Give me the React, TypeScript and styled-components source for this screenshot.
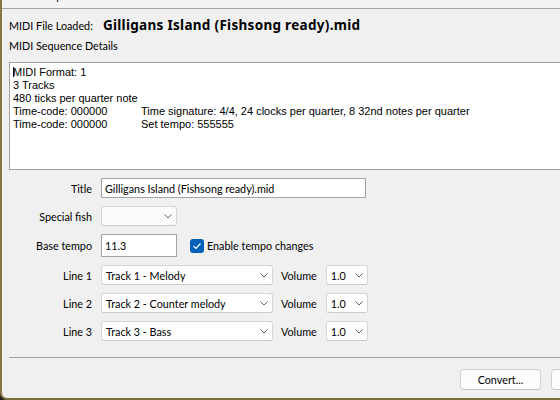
import React from "react";
import styled, { createGlobalStyle } from "styled-components";

const GlobalStyle = createGlobalStyle`
  html, body { margin: 0; padding: 0; background: #1f1f1f; }
  #root { width: 560px; height: 400px; overflow: hidden; }
  * { box-sizing: border-box; }
`;

const UI_FONT = `Lato, "Noto Sans", sans-serif`;

const Window = styled.div`
  width: 641px;
  height: 400px;
  background: #f0f0f0;
  border-left: 2px solid #857543;
  border-bottom: 2px solid #7d6e3e;
  border-bottom-left-radius: 7px;
  display: flex;
  flex-direction: column;
  font-family: ${UI_FONT};
  font-size: 10.8px;
  color: #000;
  overflow: hidden;
`;

const MenuBar = styled.div`
  height: 9px;
  flex: none;
  display: flex;
  align-items: flex-end;
  gap: 14px;
  padding-left: 7px;
  background: #f3f3f3;
  border-bottom: 1px solid #a6a6a6;
  overflow: hidden;
`;

const MenuItem = styled.span`
  line-height: 16px;
  margin-bottom: 4px;
`;

const Content = styled.div`
  flex: 1;
  display: flex;
  flex-direction: column;
  padding: 0 9px 0 7px;
`;

const LoadedRow = styled.div`
  display: flex;
  align-items: baseline;
  gap: 10px;
  height: 16px;
  line-height: 16px;
  margin-top: 8px;
`;

const FileName = styled.span`
  font-family: "Noto Sans", sans-serif;
  font-weight: 700;
  font-size: 13.5px;
  letter-spacing: 0.3px;
  line-height: 16px;
`;

const SectionLabel = styled.div`
  line-height: 16px;
  margin-top: 5px;
`;

const Details = styled.div`
  margin-top: 8px;
  height: 108px;
  background: #fff;
  border: 1px solid #a0a0a0;
  padding: 3px 3px 0 3px;
  font-family: "Liberation Sans", Arial, sans-serif;
  font-size: 11px;
  line-height: 13px;
  color: #000;
`;

const DetailLine = styled.div`
  white-space: pre;
  display: flex;
`;

const Col = styled.span`
  display: inline-block;
  width: 128px;
`;

const Caret = styled.span`
  display: inline-block;
  width: 1px;
  height: 10px;
  margin-top: 1px;
  margin-right: -1px;
  background: #000;
`;

const Form = styled.div`
  margin-top: 8px;
  display: grid;
  grid-template-columns: 83px 1fr;
  column-gap: 9px;
  row-gap: 8px;
  align-items: center;
`;

const Label = styled.label`
  text-align: right;
  white-space: nowrap;
`;

const Field = styled.div`
  display: flex;
  align-items: center;
`;

const TextInput = styled.div<{ $w: number; $h: number }>`
  width: ${(p) => p.$w}px;
  height: ${(p) => p.$h}px;
  background: #fff;
  border: 1px solid #a3a3a3;
  padding-left: 3px;
  display: flex;
  align-items: center;
  white-space: nowrap;
`;

const Combo = styled.div<{ $w: number; $empty?: boolean }>`
  width: ${(p) => p.$w}px;
  height: 20px;
  background: ${(p) => (p.$empty ? "#fbfbfb" : "#fff")};
  border: 1px solid #d6d6d6;
  border-bottom-color: #cacaca;
  border-radius: 3px;
  padding: 0 4px 0 4px;
  display: flex;
  align-items: center;
  justify-content: space-between;
  white-space: nowrap;
`;

const Chevron = () => (
  <svg width="8" height="5" viewBox="0 0 8 5" style={{ flex: "none" }}>
    <path d="M0.5 0.5 L4 4 L7.5 0.5" fill="none" stroke="#606060" strokeWidth="1" />
  </svg>
);

const CheckWrap = styled.div`
  display: flex;
  align-items: center;
  gap: 3px;
  margin-left: 13px;
`;

const CheckBox = styled.div`
  width: 14px;
  height: 14px;
  border-radius: 3px;
  background: #005fb8;
  display: flex;
  align-items: center;
  justify-content: center;
`;

const VolumeLabel = styled.span`
  margin: 0 9px 0 8px;
`;

const Separator = styled.div`
  margin-top: 16px;
  height: 1px;
  background: #a0a0a0;
  margin-right: -9px;
`;

const ButtonRow = styled.div`
  margin-top: 11px;
  display: flex;
  justify-content: flex-end;
  gap: 10px;
`;

const Button = styled.div`
  width: 81px;
  height: 21px;
  background: #fdfdfd;
  border: 1px solid #d0d0d0;
  border-bottom-color: #c2c2c2;
  border-radius: 4px;
  display: flex;
  align-items: center;
  justify-content: center;
`;

const tracks = [
  { line: "Line 1", track: "Track 1 - Melody" },
  { line: "Line 2", track: "Track 2 - Counter melody" },
  { line: "Line 3", track: "Track 3 - Bass" },
];

export default function App() {
  return (
    <>
      <GlobalStyle />
      <Window>
        <MenuBar>
          <MenuItem>File</MenuItem>
          <MenuItem>Help</MenuItem>
        </MenuBar>
        <Content>
          <LoadedRow>
            <span>MIDI File Loaded:</span>
            <FileName>Gilligans Island (Fishsong ready).mid</FileName>
          </LoadedRow>
          <SectionLabel>MIDI Sequence Details</SectionLabel>
          <Details>
            <DetailLine>
              <Caret />
              MIDI Format: 1
            </DetailLine>
            <DetailLine>3 Tracks</DetailLine>
            <DetailLine>480 ticks per quarter note</DetailLine>
            <DetailLine>
              <Col>Time-code: 000000</Col>
              <span>Time signature: 4/4, 24 clocks per quarter, 8 32nd notes per quarter</span>
            </DetailLine>
            <DetailLine>
              <Col>Time-code: 000000</Col>
              <span>Set tempo: 555555</span>
            </DetailLine>
          </Details>
          <Form>
            <Label>Title</Label>
            <Field>
              <TextInput $w={265} $h={20}>
                Gilligans Island (Fishsong ready).mid
              </TextInput>
            </Field>
            <Label>Special fish</Label>
            <Field>
              <Combo $w={76} $empty>
                <span />
                <Chevron />
              </Combo>
            </Field>
            <Label>Base tempo</Label>
            <Field>
              <TextInput $w={76} $h={23}>
                11.3
              </TextInput>
              <CheckWrap>
                <CheckBox>
                  <svg width="10" height="8" viewBox="0 0 10 8">
                    <path d="M1.5 4 L4 6.5 L8.5 1.5" fill="none" stroke="#fff" strokeWidth="1.2" />
                  </svg>
                </CheckBox>
                <span>Enable tempo changes</span>
              </CheckWrap>
            </Field>
            {tracks.map((t) => (
              <React.Fragment key={t.line}>
                <Label>{t.line}</Label>
                <Field>
                  <Combo $w={172}>
                    <span>{t.track}</span>
                    <Chevron />
                  </Combo>
                  <VolumeLabel>Volume</VolumeLabel>
                  <Combo $w={42}>
                    <span>1.0</span>
                    <Chevron />
                  </Combo>
                </Field>
              </React.Fragment>
            ))}
          </Form>
          <Separator />
          <ButtonRow>
            <Button>Convert...</Button>
            <Button>Cancel</Button>
          </ButtonRow>
        </Content>
      </Window>
    </>
  );
}
